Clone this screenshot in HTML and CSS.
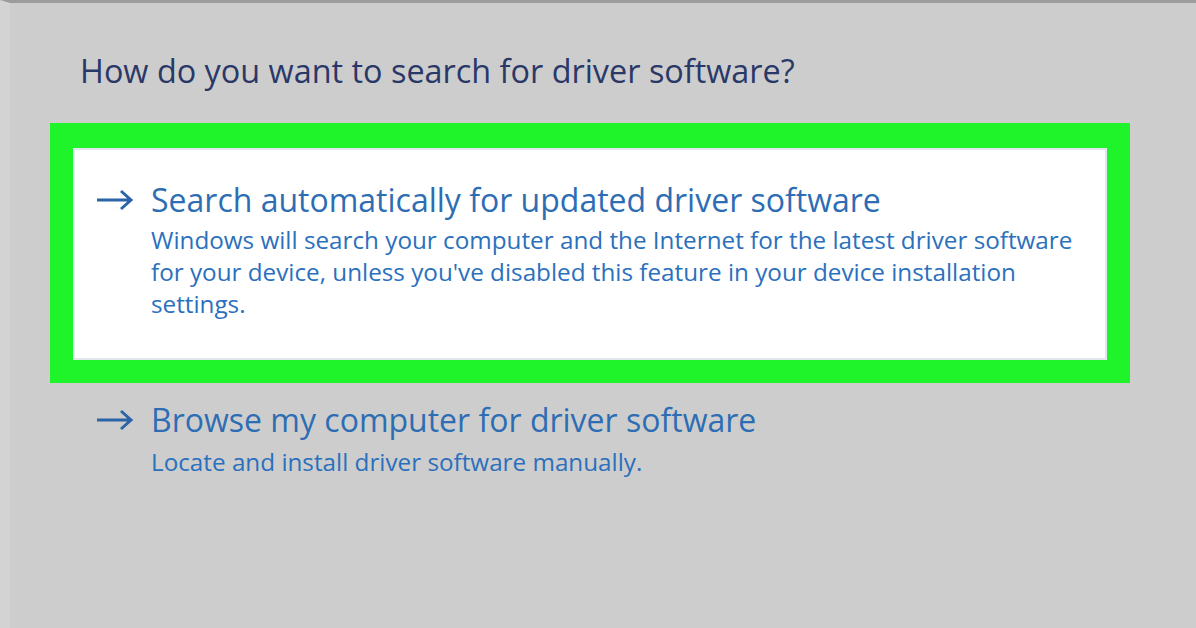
FILE: index.html
```html
<!DOCTYPE html>
<html lang="en">
<head>
<meta charset="utf-8">
<title>Update Drivers</title>
<link rel="stylesheet" href="styles.css">
</head>
<body>
<div class="window">
  <h1 class="heading">How do you want to search for driver software?</h1>
  <div class="options">
    <div class="option selected">
      <div class="card">
        <svg class="arrow" width="40" height="24" viewBox="0 0 40 24"><path d="M2 12 H36 M26 3 L36 12 L26 21" fill="none" stroke="#2a63a8" stroke-width="3"/></svg>
        <div class="text">
          <div class="title">Search automatically for updated driver software</div>
          <div class="desc">Windows will search your computer and the Internet for the latest driver software<br>for your device, unless you've disabled this feature in your device installation<br>settings.</div>
        </div>
      </div>
    </div>
    <div class="option plain">
      <svg class="arrow" width="40" height="24" viewBox="0 0 40 24"><path d="M2 12 H36 M26 3 L36 12 L26 21" fill="none" stroke="#2a63a8" stroke-width="3"/></svg>
      <div class="text">
        <div class="title">Browse my computer for driver software</div>
        <div class="desc">Locate and install driver software manually.</div>
      </div>
    </div>
  </div>
</div>
</body>
</html>
```
FILE: styles.css
```css
html, body {
  margin: 0;
  padding: 0;
  height: 100%;
}
body {
  background: #cdcdcd;
  font-family: "Open Sans", "Noto Sans", sans-serif;
}
.window {
  box-sizing: border-box;
  height: 628px;
  border-top: 3px solid #9c9c9c;
  border-left: 10px solid #d3d3d3;
  padding: 47px 0 0 40px;
}
.heading {
  margin: 0 0 33px 30px;
  font-size: 32.4px;
  font-weight: 400;
  line-height: 40px;
  color: #2a3868;
  white-space: nowrap;
}
.options {
  width: 1080px;
}
.option.selected {
  border: 23px solid #1ff42b;
  border-top-width: 25px;
}
.card {
  display: flex;
  align-items: flex-start;
  gap: 16px;
  background: #fff;
  border: 2px solid #e2e7ef;
  padding: 30px 20px 38px 20px;
}
.option.plain {
  display: flex;
  align-items: flex-start;
  gap: 16px;
  padding: 17px 0 0 45px;
}
.arrow {
  flex: none;
  margin-top: 8px;
}
.title {
  font-size: 32px;
  line-height: 40px;
  color: #2d6db4;
  white-space: nowrap;
}
.desc {
  margin-top: 4px;
  font-size: 24.25px;
  line-height: 32px;
  color: #2a70bd;
  white-space: nowrap;
}
.plain .desc {
  margin-top: 6px;
}
```
